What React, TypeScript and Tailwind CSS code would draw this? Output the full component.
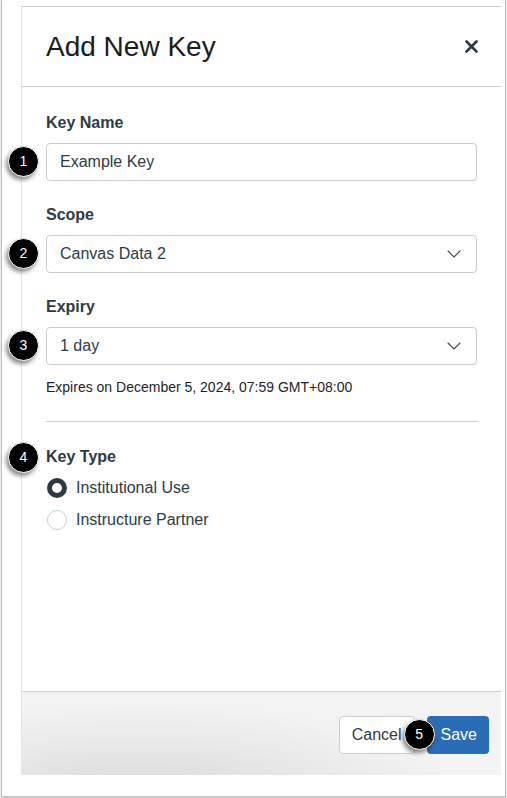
import { ChevronDown } from "lucide-react";

function Badge({ n, className = "" }: { n: number; className?: string }) {
  return (
    <span
      className={`absolute z-10 flex h-[31px] w-[31px] items-center justify-center rounded-full border border-white bg-black text-[14px] text-white shadow-[-2px_3px_4px_rgba(0,0,0,0.45)] ${className}`}
    >
      {n}
    </span>
  );
}

function Field({ label, value, badge, select }: { label: string; value: string; badge: number; select?: boolean }) {
  return (
    <div>
      <label className="block text-[16px] font-bold leading-5 text-[#2d3b45]">{label}</label>
      <div className="relative mt-2.5">
        <Badge n={badge} className="left-[-38px] top-[3px]" />
        <div className="flex h-[38px] items-center justify-between rounded-[4px] border border-[#c7cdd1] bg-white pl-[13px] pr-[10px] text-[16px] text-[#2d3b45]">
          <span>{value}</span>
          {select && <ChevronDown size={24} strokeWidth={1.1} className="text-[#3d4850]" />}
        </div>
      </div>
    </div>
  );
}

export default function App() {
  return (
    <div className="h-[798px] w-[507px] bg-white font-['Liberation_Sans',Arial,sans-serif]">
      <div className="ml-px h-[797px] w-[505px] border-x border-b border-[#bdbdbd] pl-[19px] pt-[6px] shadow-[0_1px_2px_rgba(0,0,0,0.25)]">
        {/* Modal */}
        <div className="flex h-[769px] w-[480px] flex-col border-l border-[#e6e6e6] border-t border-t-[#c9c9c9]">
          <div className="flex h-[80px] items-center justify-between border-b border-[#c7cdd1] pl-6 pr-[23px]">
            <h2 className="pt-px text-[28px] leading-none text-[#1c1c1c]">Add New Key</h2>
            <svg width="13" height="13" viewBox="0 0 13 13" className="text-[#2d3b45]">
              <path d="M1.5 1.5L11.5 11.5M11.5 1.5L1.5 11.5" stroke="currentColor" strokeWidth="2.6" strokeLinecap="round" />
            </svg>
          </div>

          <div className="flex-1 pl-6 pr-[24px] pt-[26px]">
            <div className="flex flex-col gap-6">
              <Field label="Key Name" value="Example Key" badge={1} />
              <Field label="Scope" value="Canvas Data 2" badge={2} select />
              <div>
                <Field label="Expiry" value="1 day" badge={3} select />
                <p className="mt-3 text-[14px] leading-5 text-[#1f2326]">Expires on December 5, 2024, 07:59 GMT+08:00</p>
              </div>
            </div>

            <div className="mr-[-1px] mt-6 border-t border-[#c7cdd1]" />

            <div className="relative mt-[25px]">
              <Badge n={4} className="left-[-38px] top-[-5px]" />
              <div className="text-[16px] font-bold leading-5 text-[#2d3b45]">Key Type</div>
              <div className="mt-[9px] flex flex-col gap-2 text-[16px] text-[#2d3b45]">
                <div className="flex h-6 items-center gap-[9px]">
                  <span className="ml-px h-[20px] w-[20px] rounded-full border-[5px] border-[#2d3b45] bg-white" />
                  <span>Institutional Use</span>
                </div>
                <div className="flex h-6 items-center gap-[9px]">
                  <span className="ml-px h-[20px] w-[20px] rounded-full border border-[#c7cdd1] bg-white" />
                  <span>Instructure Partner</span>
                </div>
              </div>
            </div>
          </div>

          {/* Footer */}
          <div className="flex h-[84px] items-start justify-end border-t border-[#c7cdd1] bg-[radial-gradient(ellipse_at_25%_150%,#d4d4d4,#f3f3f3_65%)] pr-[12px] pt-6">
            <div className="relative flex gap-3">
              <button className="h-[38px] rounded-[4px] border border-[#c7cdd1] bg-white pl-[12px] pr-[12px] text-[16px] text-[#2d3b45]">
                Cancel
              </button>
              <Badge n={5} className="left-[65px] top-[3px]" />
              <button className="h-[38px] rounded-[4px] bg-[#2b6cb6] pl-[14px] pr-[12px] text-[16px] text-white">
                Save
              </button>
            </div>
          </div>
        </div>
      </div>
    </div>
  );
}
